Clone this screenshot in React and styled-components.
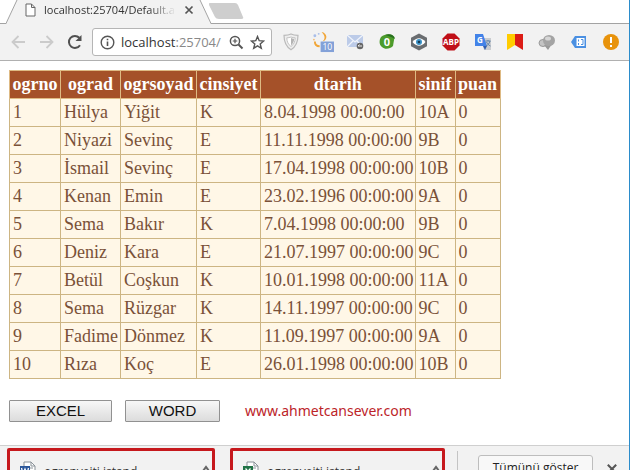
import React from 'react';
import styled, { createGlobalStyle } from 'styled-components';

const GlobalStyle = createGlobalStyle`
  * {
    box-sizing: border-box;
  }
  body {
    margin: 0;
    background: #fff;
  }
`

const Window = styled.div`
  height: 100vh;
  display: flex;
  flex-direction: column;
  overflow: hidden;
  border-right: 1px solid #2b8ccb;
  background: #fff;
  font-family: "Open Sans", "Noto Sans", sans-serif;
`

const TabStrip = styled.header`
  display: flex;
  flex: none;
  height: 24px;
  border-bottom: 1px solid #a3a3a3;
`

const Tab = styled.div`
  display: grid;
  grid-template-columns: 100%;
  flex: none;
  width: 210px;
  height: 24px;
  margin-left: 6px;

  > * {
    grid-area: 1 / 1;
  }
`

const TabContent = styled.div`
  display: flex;
  align-items: center;
  gap: 8px;
  height: 20px;
  padding: 0 22px 0 19px;

  > svg {
    flex: none;
  }
`

const TabTitle = styled.span`
  flex: 1;
  white-space: nowrap;
  font-size: 11px;
  line-height: 20px;
  color: #333;
  mask-image: linear-gradient(to right, #000 80%, transparent);
`

const IconButton = styled.button`
  display: flex;
  flex: none;
  padding: 0;
  border: 0;
  background: none;
  cursor: pointer;
`

const NewTab = styled.button`
  width: 35px;
  height: 16px;
  margin: 3px 0 0 -7px;
  padding: 0;
  border: 0;
  background: none;
`

const Toolbar = styled.nav`
  display: flex;
  align-items: center;
  flex: none;
  height: 37px;
  padding: 0 7px 0 11px;
  border-bottom: 1px solid #b0b0b0;
  background: #f2f2f2;
`

const NavButtons = styled.div`
  display: flex;
  flex: none;
  gap: 13px;
  margin-right: 9px;
`

const AddressBar = styled.div`
  display: flex;
  align-items: center;
  flex: 1;
  min-width: 0;
  gap: 6px;
  height: 28px;
  padding: 0 6px 0 7px;
  border: 1px solid #b5b5b5;
  border-radius: 3px;
  background: #fff;
`

const Address = styled.div`
  flex: 1;
  min-width: 0;
  white-space: nowrap;
  font-size: 13px;
  line-height: 20px;
  color: #333;

  > span {
    color: #888;
  }
`

const Extensions = styled.div`
  display: flex;
  align-items: center;
  flex: none;
  gap: 10px;
  margin-left: 8px;
`

const Page = styled.main`
  flex: 1;
  min-height: 0;
  padding: 9px 8px 0 9px;
`

const Grid = styled.table`
  border-collapse: collapse;
  background: #fff7e7;
  border: 1px solid #deba84;
  font-family: "Liberation Serif", "Times New Roman", serif;
  font-size: 18px;
  line-height: 21px;
`

const HeaderCell = styled.th`
  width: ${props => props.$width}px;
  padding: 3px 2px;
  border: 1px solid #deba84;
  background: #a55129;
  color: #fff;
`

const Cell = styled.td`
  padding: 3px 1px 3px 3px;
  border: 1px solid #cdb583;
  color: #7a5138;
  white-space: nowrap;
`

const Actions = styled.div`
  display: flex;
  align-items: center;
  margin-top: 21px;
`

const ExportButton = styled.button`
  width: ${props => props.$width}px;
  height: 22px;
  margin-right: 13px;
  padding: 0;
  border: 1px solid #919191;
  border-radius: 1px;
  background: linear-gradient(#f7f7f7, #dcdcdc);
  font-family: "Liberation Sans", Arial, sans-serif;
  font-size: 15px;
  line-height: 20px;
  color: #111;
`

const SiteLink = styled.a`
  margin-left: 12px;
  font-family: "Noto Sans", sans-serif;
  font-size: 14px;
  line-height: 20px;
  color: #bc2429;
  text-decoration: none;
`

const Shelf = styled.footer`
  display: flex;
  flex: none;
  height: 25px;
  padding: 2px 11px 0 7px;
  overflow: hidden;
  border-top: 1px solid #cfcfcf;
  background: #f2f2f2;
`

const Download = styled.button`
  display: flex;
  align-items: flex-start;
  flex: none;
  width: ${props => props.$width}px;
  height: 46px;
  margin-right: 15px;
  padding: 10px 2px 0 10px;
  border: 3px solid #c6181d;
  border-radius: 2px;
  background: #f2f2f2;
  font-family: "Open Sans", sans-serif;
  font-size: 12px;
  line-height: 22px;
  color: #333;
  text-align: left;

  > span {
    flex: 1;
    padding-left: 8px;
  }
`

const ShelfEnd = styled.div`
  display: flex;
  align-items: flex-start;
  flex: 1;
  justify-content: space-between;
  margin: 3px 0 0 -3px;
  padding-left: 20px;
  border-left: 1px solid #c4c4c4;
`

const ShowAll = styled.button`
  width: 115px;
  height: 28px;
  margin-top: 4px;
  padding: 0 0 2px;
  border: 1px solid #bdbdbd;
  border-radius: 3px;
  background: #f8f8f8;
  font-family: "Open Sans", sans-serif;
  font-size: 12px;
  line-height: 24px;
  color: #222;
`

const CloseShelf = styled(IconButton)`
  margin-top: 12px;
`

const columns = [
  { name: 'ogrno', width: 51 },
  { name: 'ograd', width: 60 },
  { name: 'ogrsoyad', width: 76 },
  { name: 'cinsiyet', width: 64 },
  { name: 'dtarih', width: 154 },
  { name: 'sinif', width: 40 },
  { name: 'puan', width: 45 },
]

const students = [
  ['1', 'Hülya', 'Yiğit', 'K', '8.04.1998 00:00:00', '10A', '0'],
  ['2', 'Niyazi', 'Sevinç', 'E', '11.11.1998 00:00:00', '9B', '0'],
  ['3', 'İsmail', 'Sevinç', 'E', '17.04.1998 00:00:00', '10B', '0'],
  ['4', 'Kenan', 'Emin', 'E', '23.02.1996 00:00:00', '9A', '0'],
  ['5', 'Sema', 'Bakır', 'K', '7.04.1998 00:00:00', '9B', '0'],
  ['6', 'Deniz', 'Kara', 'E', '21.07.1997 00:00:00', '9C', '0'],
  ['7', 'Betül', 'Coşkun', 'K', '10.01.1998 00:00:00', '11A', '0'],
  ['8', 'Sema', 'Rüzgar', 'K', '14.11.1997 00:00:00', '9C', '0'],
  ['9', 'Fadime', 'Dönmez', 'K', '11.09.1997 00:00:00', '9A', '0'],
  ['10', 'Rıza', 'Koç', 'E', '26.01.1998 00:00:00', '10B', '0'],
]

const CloseIcon = ({ size }) => (
  <svg width={size} height={size} viewBox="0 0 10 10">
    <path d="M1.5 1.5l7 7M8.5 1.5l-7 7" stroke="#555" strokeWidth="1.7" />
  </svg>
)

const Arrow = ({ flip }) => (
  <svg width="15" height="16" viewBox="0 0 15 16">
    <path
      d={flip ? 'M1 8h12M7.5 2l6 6-6 6' : 'M14 8H2M7.5 2l-6 6 6 6'}
      fill="none" stroke="#cbcbcb" strokeWidth="1.8"
    />
  </svg>
)

const ReloadIcon = () => (
  <svg width="16" height="16" viewBox="0 0 16 16">
    <path d="M13 11.2A6 6 0 1 1 12.3 3.8" fill="none" stroke="#505050" strokeWidth="2" />
    <path d="M14.5 1v6h-6z" fill="#505050" />
  </svg>
)

const InfoIcon = () => (
  <svg width="15" height="15" viewBox="0 0 15 15">
    <circle cx="7.5" cy="7.5" r="6.3" fill="none" stroke="#555" strokeWidth="1.4" />
    <path d="M7.5 6.5v4.5M7.5 3.7v1.6" stroke="#555" strokeWidth="1.6" />
  </svg>
)

const ZoomIcon = () => (
  <svg width="15" height="15" viewBox="0 0 15 15">
    <circle cx="6" cy="6" r="4.6" fill="none" stroke="#555" strokeWidth="1.5" />
    <path d="M9.5 9.5l4 4" stroke="#555" strokeWidth="1.9" />
    <path d="M6 3.7v4.6M3.7 6h4.6" stroke="#555" strokeWidth="1.2" />
  </svg>
)

const StarIcon = () => (
  <svg width="15" height="15" viewBox="0 0 15 15">
    <path
      d="M7.5 1.5l1.7 4.2 4.5.3-3.5 2.9 1.1 4.4-3.8-2.4-3.8 2.4 1.1-4.4L1.3 6l4.5-.3z"
      fill="none" stroke="#555" strokeWidth="1.4"
    />
  </svg>
)

const ShieldIcon = () => (
  <svg width="22" height="22" viewBox="0 0 22 22">
    <path d="M11 3c2 1 4 1.3 7 1.3 0 6-1.5 11-7 14.5C5.5 15.3 4 10.3 4 4.3 7 4.3 9 4 11 3z" fill="#eee" stroke="#bababa" strokeWidth="1.2" />
    <path d="M11 6c1.5.6 2.5.8 4.2.8-.2 4-1.2 6.5-4.2 8.7-3-2.2-4-4.7-4.2-8.7C8.5 6.8 9.5 6.6 11 6z" fill="#fff" stroke="#c4c4c4" />
    <path d="M11 7v7.5c2-1.7 3-4 3.2-6.7-1.4-.1-2.2-.3-3.2-.8z" fill="#b4b4b4" />
  </svg>
)

const WeatherIcon = () => (
  <svg width="22" height="22" viewBox="1 1 23 23">
    <path d="M11 2c6 1 7 8 1 10 3-3 3-6-1-10z" fill="#f1a638" />
    <circle cx="4" cy="6" r="1.5" fill="#a9bee9" />
    <circle cx="8" cy="4" r="1" fill="#a9bee9" />
    <circle cx="3" cy="10" r="1" fill="#f3bd78" />
    <path d="M4 12c0 4 2 5 5 5" fill="none" stroke="#f1a638" strokeWidth="2" />
    <rect x="10" y="12" width="14" height="11" fill="#83a1d8" />
    <text x="17" y="21" textAnchor="middle" fontFamily="Open Sans, sans-serif" fontSize="9" fill="#fff">10</text>
  </svg>
)

const MailIcon = () => (
  <svg width="22" height="22" viewBox="0 0 22 22">
    <rect x="3" y="4" width="16" height="12" fill="#bccbe8" />
    <path d="M3 4l8 7 8-7M3 16l6-6M19 16l-6-6" fill="none" stroke="#f0f4fb" strokeWidth="1.2" />
    <circle cx="16" cy="15" r="3.3" fill="#666" />
    <path d="M14 15h4M14 15l1.5-1.5" stroke="#eee" strokeWidth="1" />
  </svg>
)

const CounterIcon = () => (
  <svg width="22" height="22" viewBox="0 0 22 22">
    <path d="M5 6C9 3 15 2 18.5 6l-1.5 9c-3 3-8 4-11 1-3-2-3-7-1-10z" fill="#4c9b2b" />
    <path d="M9 4c5-2 9 0 10 4-3-2-6-3-10-4z" fill="#286f20" />
    <text x="11" y="15" textAnchor="middle" fontFamily="Open Sans, sans-serif" fontSize="11" fontWeight="700" fill="#fff">0</text>
  </svg>
)

const EyeIcon = () => (
  <svg width="22" height="22" viewBox="0 0 22 22">
    <path d="M11 2.5l8 4.3v8.4l-8 4.3-8-4.3V6.8z" fill="#6a6d70" />
    <path d="M4.5 11c4-5 9-5 13 0-4 5-9 5-13 0z" fill="#fff" />
    <circle cx="11" cy="11" r="3" fill="#3d94c8" />
    <circle cx="11" cy="11" r="1.3" fill="#153b56" />
  </svg>
)

const AbpIcon = () => (
  <svg width="22" height="22" viewBox="0 0 22 22">
    <path d="M7.5 2.5h7l5 5v7l-5 5h-7l-5-5v-7z" fill="#c01018" />
    <text x="11" y="14" textAnchor="middle" fontFamily="Open Sans, sans-serif" fontSize="8" fontWeight="700" fill="#fff">ABP</text>
  </svg>
)

const TranslateIcon = () => (
  <svg width="22" height="22" viewBox="0 0 22 22">
    <path d="M9 7h10v12h-7z" fill="#cbcdd0" />
    <path d="M3 3h8l4 12H3z" fill="#4383e8" />
    <path d="M11 15h4l-2 4z" fill="#315fb0" />
    <text x="8" y="12" textAnchor="middle" fontFamily="Open Sans, sans-serif" fontSize="8" fontWeight="700" fill="#fff">G</text>
    <path d="M13.5 10h5M16 9v1M18 10c-1 3-2 4-4 5M14.5 11c1 2 2 3 4 4" fill="none" stroke="#5e82a9" />
  </svg>
)

const BookmarkIcon = () => (
  <svg width="22" height="22" viewBox="0 0 22 22">
    <path d="M3 3h8v11l-8 5z" fill="#ffcc00" />
    <path d="M11 3h8v16l-8-5z" fill="#dc1c16" />
  </svg>
)

const BalloonsIcon = () => (
  <svg width="22" height="22" viewBox="0 0 22 22">
    <ellipse cx="7" cy="12" rx="4" ry="3.5" fill="#c4c4c4" stroke="#999" />
    <path d="M8 14l4 5 4-6z" fill="#999" />
    <ellipse cx="13" cy="9.5" rx="6" ry="5.5" fill="#a4a4a4" />
    <ellipse cx="12" cy="7.5" rx="3" ry="2" fill="#d6d6d6" />
  </svg>
)

const TagIcon = () => (
  <svg width="22" height="22" viewBox="0 0 22 22">
    <path d="M3 11l4-6h11v12H7z" fill="#4b90e2" />
    <path d="M8.5 7h8v8h-8z" fill="#fff" />
    <path d="M10.5 8.5v2M10.5 12v2M13 8.500h2v5h-2" fill="none" stroke="#4b90e2" />
  </svg>
)

const AlertIcon = () => (
  <svg width="22" height="22" viewBox="0 0 22 22">
    <circle cx="11" cy="11" r="8" fill="#e8930c" />
    <path d="M11 6v6M11 14v2" stroke="#fff" strokeWidth="2" />
  </svg>
)

const FileIcon = ({ color, children }) => (
  <svg width="16" height="18" viewBox="0 0 16 18">
    <path d="M4 1h7l4 4v12H4z" fill="#fff" stroke="#8a9298" />
    <path d="M11 1v4h4M7 7h6M9 10h5" fill="none" stroke="#8a9298" />
    <rect x="0" y="5" width="10" height="10" fill={color} />
    {children}
  </svg>
)

const ChevronUp = () => (
  <svg width="8" height="12" viewBox="0 0 8 12">
    <path d="M1 10l3-4 3 4" fill="none" stroke="#666" strokeWidth="2" />
  </svg>
)

const extensions = [
  { name: 'Shield', Icon: ShieldIcon },
  { name: 'Weather', Icon: WeatherIcon },
  { name: 'Mail', Icon: MailIcon },
  { name: 'Counter', Icon: CounterIcon },
  { name: 'Eye', Icon: EyeIcon },
  { name: 'Adblock', Icon: AbpIcon },
  { name: 'Translate', Icon: TranslateIcon },
  { name: 'Bookmarks', Icon: BookmarkIcon },
  { name: 'Balloons', Icon: BalloonsIcon },
  { name: 'Tag', Icon: TagIcon },
  { name: 'Alert', Icon: AlertIcon },
]

const App = () => {
  return (
    <Window>
      <GlobalStyle />
      <TabStrip>
        <Tab>
          <svg width="210" height="24" viewBox="0 0 210 24">
            <path d="M0 24L11 0h183l11 24z" fill="#f2f2f2" />
            <path d="M0 23.5L11 0M194 0l11 23.5" fill="none" stroke="#a3a3a3" />
          </svg>
          <TabContent>
            <svg width="11" height="14" viewBox="0 0 11 14">
              <path d="M1 1h5.5L10 4.5V13H1zM6.5 1v3.5H10" fill="#fff" stroke="#666" />
            </svg>
            <TabTitle>localhost:25704/Default.a</TabTitle>
            <IconButton aria-label="Close tab"><CloseIcon size={10} /></IconButton>
          </TabContent>
        </Tab>
        <NewTab aria-label="New tab">
          <svg width="35" height="16" viewBox="0 0 35 16">
            <path d="M1 0h25q2 0 3 2l5 12q1 2-2 2H10q-3 0-4-2L0 2q-1-2 1-2z" fill="#cecece" />
          </svg>
        </NewTab>
      </TabStrip>
      <Toolbar>
        <NavButtons>
          <IconButton aria-label="Back"><Arrow /></IconButton>
          <IconButton aria-label="Forward"><Arrow flip /></IconButton>
          <IconButton aria-label="Reload"><ReloadIcon /></IconButton>
        </NavButtons>
        <AddressBar>
          <InfoIcon />
          <Address>localhost<span>:25704/</span></Address>
          <IconButton aria-label="Zoom"><ZoomIcon /></IconButton>
          <IconButton aria-label="Bookmark"><StarIcon /></IconButton>
        </AddressBar>
        <Extensions>
          {extensions.map(({ name, Icon }) => (
            <IconButton key={name} aria-label={name}><Icon /></IconButton>
          ))}
        </Extensions>
      </Toolbar>
      <Page>
        <Grid>
          <thead>
            <tr>
              {columns.map(col => (
                <HeaderCell key={col.name} $width={col.width}>{col.name}</HeaderCell>
              ))}
            </tr>
          </thead>
          <tbody>
            {students.map(row => (
              <tr key={row[0]}>
                {row.map((value, i) => <Cell key={columns[i].name}>{value}</Cell>)}
              </tr>
            ))}
          </tbody>
        </Grid>
        <Actions>
          <ExportButton $width={103}>EXCEL</ExportButton>
          <ExportButton $width={95}>WORD</ExportButton>
          <SiteLink href="#">www.ahmetcansever.com</SiteLink>
        </Actions>
      </Page>
      <Shelf>
        <Download $width={208}>
          <FileIcon color="#2b579a">
            <path d="M1.5 7l1.5 6 2-5 2 5 1.5-6" fill="none" stroke="#fff" strokeWidth="1.3" />
          </FileIcon>
          <span>ogrenveiti istand...</span>
          <ChevronUp />
        </Download>
        <Download $width={215}>
          <FileIcon color="#217346">
            <path d="M2.5 7.5l5 5.5M7.5 7.5l-5 5.5" fill="none" stroke="#fff" strokeWidth="1.3" />
          </FileIcon>
          <span>ogrenveiti istand...</span>
          <ChevronUp />
        </Download>
        <ShelfEnd>
          <ShowAll>Tümünü göster</ShowAll>
          <CloseShelf aria-label="Close downloads"><CloseIcon size={12} /></CloseShelf>
        </ShelfEnd>
      </Shelf>
    </Window>
  )
}

export default App;
